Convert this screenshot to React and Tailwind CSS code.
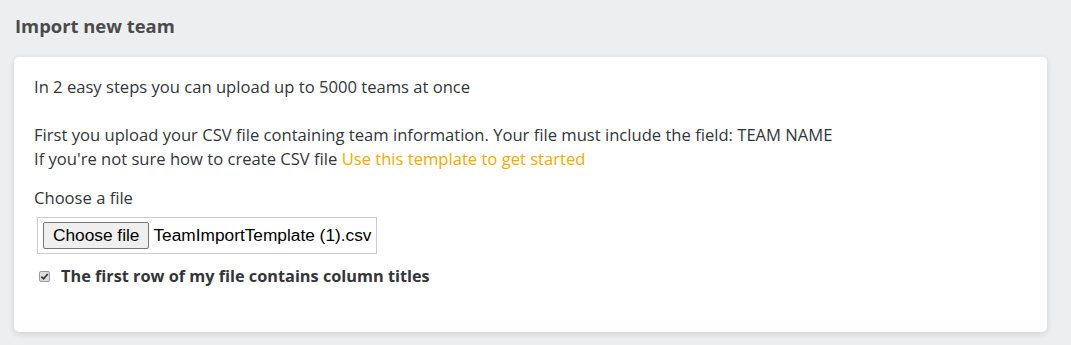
import React from "react";

const App = () => {
    return (
        <div className="min-h-[345px] bg-[#edeef0] pl-[14px] pr-[24px] pt-[14px] pb-[14px] font-['Open_Sans','Noto_Sans',sans-serif]">
            <h2 className="pl-[1px] text-[18.4px] leading-[24px] font-bold text-[#4b4b4b]">
                Import new team
            </h2>

            <div className="mt-[19px] rounded-[5px] bg-white px-[20px] pt-[18px] pb-[44px] shadow-[0_2px_6px_rgba(0,0,0,0.12)] text-[16.6px] leading-[24px] text-[#32363a]">
                <p>In 2 easy steps you can upload up to 5000 teams at once</p>

                <p className="mt-[24px]">
                    First you upload your CSV file containing team information. Your file must include the field: TEAM NAME
                </p>
                <p>
                    If you're not sure how to create CSV file{" "}
                    <a href="#" className="text-[#f0ab00]">Use this template to get started</a>
                </p>

                <p className="mt-[15px]">Choose a file</p>

                {/* Eingabefeld für die Datei, nachgebaut */}
                <div className="mt-[7px] ml-[3px] inline-flex items-center border border-[#cccccc] px-[5px] py-[4px] font-['Liberation_Sans',Arial,sans-serif] text-[17.3px] leading-[21px] text-black">
                    <span className="rounded-[2px] border border-[#767676] bg-[#efefef] px-[9px] py-[2px]">
                        Choose file
                    </span>
                    <span className="ml-[4px]">TeamImportTemplate (1).csv</span>
                </div>

                <label className="mt-[10px] ml-[5px] flex items-center gap-[11px] text-[16.3px] font-bold">
                    <span className="flex h-[11px] w-[11px] items-center justify-center rounded-[2px] border border-[#9a9a9a] bg-[#dedede]">
                        <svg viewBox="0 0 10 10" className="h-[9px] w-[9px]">
                            <path d="M1.5 5.2 L4 7.6 L8.6 2.2" fill="none" stroke="#333" strokeWidth="1.8" />
                        </svg>
                    </span>
                    <span>The first row of my file contains column titles</span>
                </label>
            </div>
        </div>
    );
};

export default App;
